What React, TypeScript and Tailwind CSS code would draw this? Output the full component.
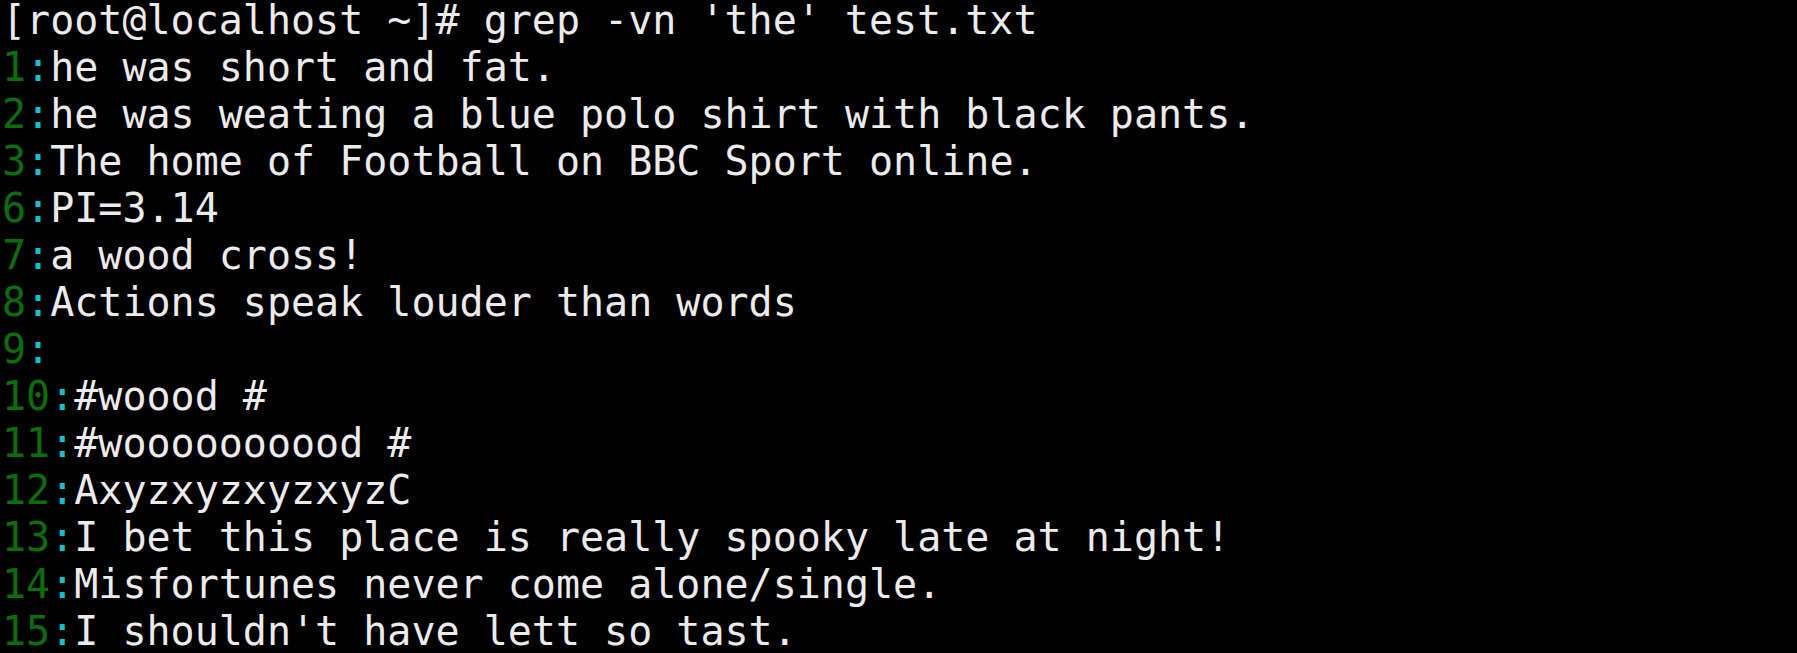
const lines: { num?: string; text: string }[] = [
  { num: "1", text: "he was short and fat." },
  { num: "2", text: "he was weating a blue polo shirt with black pants." },
  { num: "3", text: "The home of Football on BBC Sport online." },
  { num: "6", text: "PI=3.14" },
  { num: "7", text: "a wood cross!" },
  { num: "8", text: "Actions speak louder than words" },
  { num: "9", text: "" },
  { num: "10", text: "#woood #" },
  { num: "11", text: "#woooooooood #" },
  { num: "12", text: "AxyzxyzxyzxyzC" },
  { num: "13", text: "I bet this place is really spooky late at night!" },
  { num: "14", text: "Misfortunes never come alone/single." },
  { num: "15", text: "I shouldn't have lett so tast." },
];

export default function App() {
  return (
    <div className="h-screen w-full overflow-hidden bg-black">
      <div className="-mt-[3px] pl-[2px] font-['DejaVu_Sans_Mono',monospace] text-[40px] leading-[47px] text-[#ebebeb] whitespace-pre">
        <div>[root@localhost ~]# grep -vn 'the' test.txt</div>
        {lines.map((line) => (
          <div key={line.num}>
            <span className="text-[#0b6e0b]">{line.num}</span>
            <span className="text-[#12c3cc]">:</span>
            <span>{line.text}</span>
          </div>
        ))}
      </div>
    </div>
  );
}
